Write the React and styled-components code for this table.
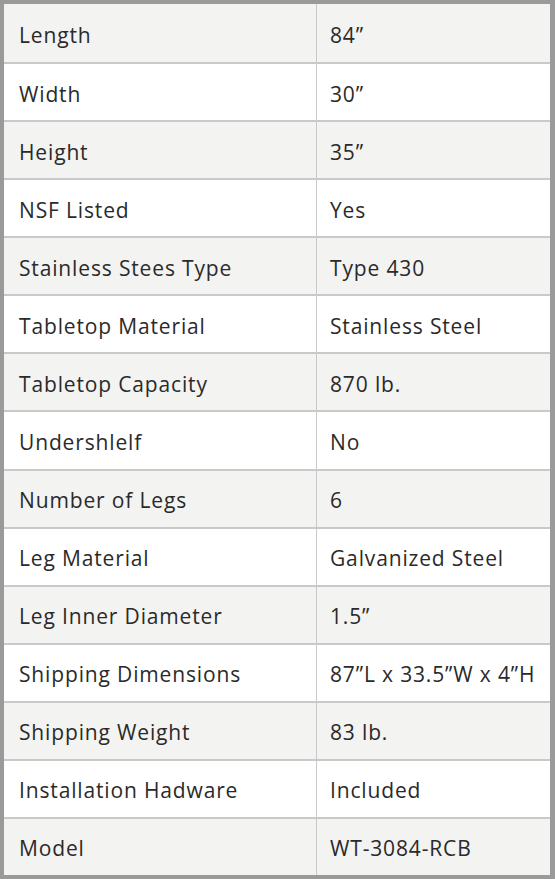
import React from "react"
import styled, { createGlobalStyle } from "styled-components"

const GlobalStyle = createGlobalStyle`
  html, body {
    margin: 0;
    padding: 0;
    background: #ffffff;
  }
  body {
    font-family: "Open Sans", "Noto Sans", "Liberation Sans", sans-serif;
  }
`

const specs = [
  ["Length", "84\u201D"],
  ["Width", "30\u201D"],
  ["Height", "35\u201D"],
  ["NSF Listed", "Yes"],
  ["Stainless Stees Type", "Type 430"],
  ["Tabletop Material", "Stainless Steel"],
  ["Tabletop Capacity", "870 lb."],
  ["Undershlelf", "No"],
  ["Number of Legs", "6"],
  ["Leg Material", "Galvanized Steel"],
  ["Leg Inner Diameter", "1.5\u201D"],
  ["Shipping Dimensions", "87\u201DL x 33.5\u201DW x 4\u201DH"],
  ["Shipping Weight", "83 lb."],
  ["Installation Hadware", "Included"],
  ["Model", "WT-3084-RCB"],
]

const Table = styled.div`
  width: 555px;
  height: 879px;
  box-sizing: border-box;
  border: 4px solid #9a9a9a;
  border-right-width: 5px;
  display: grid;
  grid-template-rows: repeat(15, 1fr);
  background: #ffffff;
`

const Row = styled.div`
  display: grid;
  grid-template-columns: 312px 1fr;
  background: ${(p) => (p.$shaded ? "#f3f3f2" : "#ffffff")};
  border-top: ${(p) => (p.$first ? "none" : "2px solid #c9c9c9")};
`

const Cell = styled.div`
  display: flex;
  align-items: center;
  padding: 3px 0 0 ${(p) => (p.$value ? "13px" : "15px")};
  font-size: 21px;
  letter-spacing: 0.85px;
  color: #2a2a2a;
  white-space: nowrap;
  border-left: ${(p) => (p.$value ? "1px solid #c9c9c9" : "none")};
`

function App() {
  return (
    <>
      <GlobalStyle />
      <Table>
        {specs.map(([label, value], i) => (
          <Row key={label} $shaded={i % 2 === 0} $first={i === 0}>
            <Cell>{label}</Cell>
            <Cell $value>{value}</Cell>
          </Row>
        ))}
      </Table>
    </>
  )
}

export default App
